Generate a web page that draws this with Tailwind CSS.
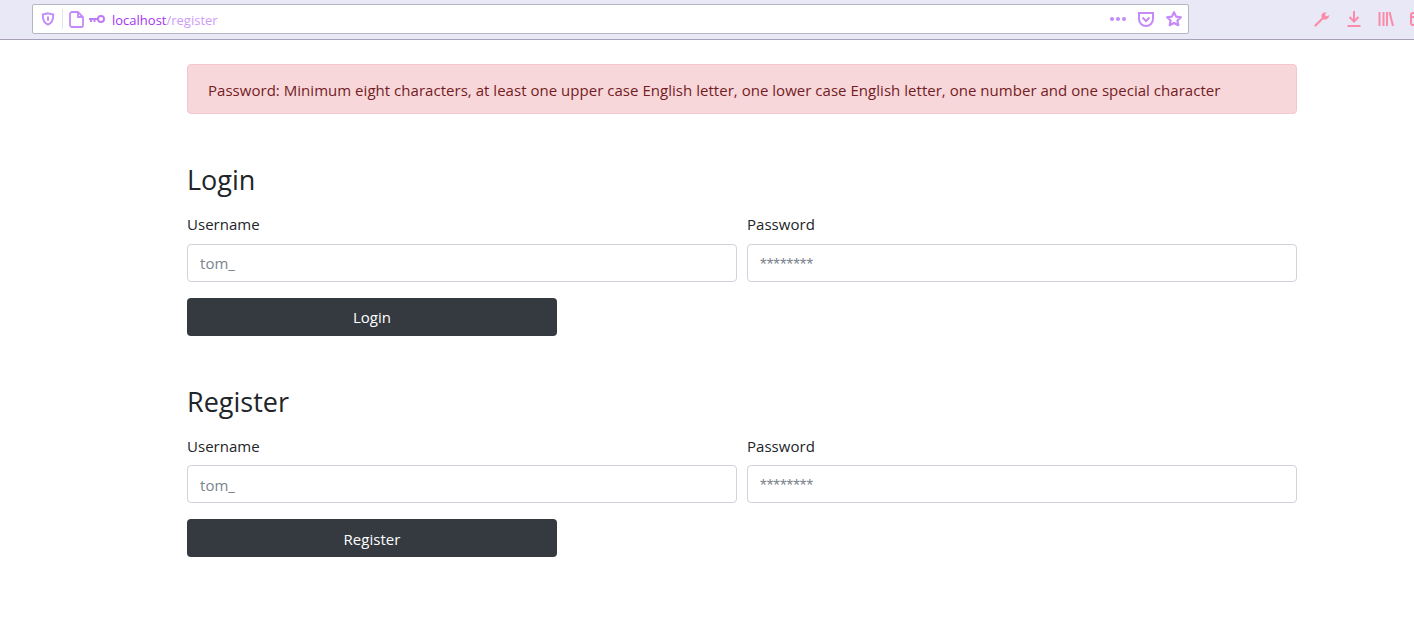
<!DOCTYPE html>
<html lang="en">
<head>
  <meta charset="UTF-8" />
  <title>Register</title>
  <script src="https://cdn.jsdelivr.net/npm/@tailwindcss/browser@4"></script>
</head>
<body class="bg-white text-[#212529] font-['Open_Sans',sans-serif] text-[15px] tracking-[0.03px] overflow-hidden">
  <!-- Browser toolbar -->
  <header class="h-10 bg-[#e8e8f6] border-b border-[#a79fb5] flex items-center pl-8">
    <div class="w-[1157px] h-[30px] mb-[1px] bg-white border border-[#b5b5c4] rounded-[2px] flex items-center shrink-0">
      <svg class="ml-[8px] w-3.5 h-3.5 text-[#c58af9]" viewBox="0 0 16 16" fill="none" stroke="currentColor" stroke-width="2.200"><path d="M8 1.500l6 1.500c0 6-1.500 9.500-6 11.500C3.500 12.500 2 9 2 3z"/><path d="M8 5v5" /></svg>
      <div class="ml-[7px] w-px h-[20px] bg-[#e3e3ea]"></div>
      <svg class="ml-[6px] w-[15px] h-[17px] text-[#c58af9]" viewBox="0 0 15 17" fill="none" stroke="currentColor" stroke-width="1.800"><path d="M3 1h6l5 5v8.500a1.500 1.500 0 0 1-1.500 1.500h-9.500a2 2 0 0 1-2-2v-11a2 2 0 0 1 2-2z"/><path d="M9 1v5h5"/></svg>
      <svg class="ml-[4px] w-[17px] h-[10px] text-[#c07cf7]" viewBox="0 0 17 10" fill="none" stroke="currentColor" stroke-width="2"><circle cx="13" cy="5" r="3"/><path d="M10 5H1M3 5v3M6.500 5v3"/></svg>
      <span class="ml-[7px] text-[13px] leading-[30px] pt-[1px] text-[#a733f5] tracking-normal">localhost<span class="text-[#cd9bfa]">/register</span></span>
      <div class="ml-auto flex items-center">
        <svg class="w-4 h-1 mr-[2px] text-[#c58af9]" viewBox="0 0 16 4" fill="currentColor"><circle cx="2" cy="2" r="2"/><circle cx="8" cy="2" r="2"/><circle cx="14" cy="2" r="2"/></svg>
        <svg class="ml-[10px] w-4 h-[15px] text-[#c58af9]" viewBox="0 0 16 15" fill="none" stroke="currentColor" stroke-width="2"><path d="M1 1h14v6a7 7 0 0 1-14 0z"/><path d="M4.500 5.500L8 9l3.500-3.500"/></svg>
        <svg class="ml-[12px] mr-[6px] w-4 h-4 text-[#c58af9]" viewBox="0 0 16 16" fill="none" stroke="currentColor" stroke-width="2.100" stroke-linejoin="round"><path d="M8 1.200l2.100 4.400 4.800.6-3.500 3.300.9 4.800L8 12l-4.300 2.300.9-4.800L1.100 6.200l4.800-.6z"/></svg>
      </div>
    </div>
    <div class="flex items-center ml-[125px] text-[#fb8ba8] mb-[1px]">
      <svg class="w-4 h-4" viewBox="0 0 16 16" fill="none" stroke="currentColor" stroke-width="2.200" stroke-linecap="round"><path d="M1.500 14.500l7.500-7.500"/><path d="M10 1.500a4 4 0 0 0-2.500 4.500l2.500 2.500a4 4 0 0 0 4.500-2l1-2.500-3 1.500-1.500-1.500 1.500-2.500z" fill="currentColor" stroke="none"/></svg>
      <svg class="ml-[16px] w-4 h-4" viewBox="0 0 16 16" fill="none" stroke="currentColor" stroke-width="2"><path d="M8 0v10M3.500 6L8 10.500 12.500 6M1.500 15h13"/></svg>
      <svg class="ml-[16px] w-4 h-4" viewBox="0 0 16 16" fill="none" stroke="currentColor" stroke-width="2"><path d="M1.500 1v14M5.500 1v14M9 1v14M11.500 1l3.500 14"/></svg>
      <svg class="ml-[16px] w-4 h-4" viewBox="0 0 16 16" fill="none" stroke="currentColor" stroke-width="2"><rect x="1" y="2" width="14" height="12" rx="2"/><path d="M1 6h14"/></svg>
    </div>
  </header>

  <main class="w-[1110px] ml-[187px] pt-6">
    <div class="h-[50px] px-5 pt-[2px] flex items-center bg-[#f8d7da] border border-[#f5c6cb] rounded text-[#721c24]">Password: Minimum eight characters, at least one upper case English letter, one lower case English letter, one number and one special character</div>

    <section class="mt-[48px]">
      <h2 class="h-[34px] pt-[1px] text-[27px] leading-[34px] tracking-normal">Login</h2>
      <div class="mt-4 grid grid-cols-2 gap-[10px]">
        <label class="block">
          <span class="block leading-6">Username</span>
          <input placeholder="tom_" class="mt-2 block w-full h-[38px] px-3 border border-[#ced4da] rounded bg-white placeholder:text-[#7c858d]" />
        </label>
        <label class="block">
          <span class="block leading-6">Password</span>
          <input placeholder="********" class="mt-2 block w-full h-[38px] px-3 pt-[4px] border border-[#ced4da] rounded bg-white font-['Liberation_Sans',sans-serif] text-[17px] placeholder:text-[#7c858d]" />
        </label>
      </div>
      <button class="mt-4 block w-[370px] h-[38px] bg-[#343a40] text-white rounded">Login</button>
    </section>

    <section class="mt-[48px]">
      <h2 class="h-[34px] pt-[1px] text-[27px] leading-[34px] tracking-normal">Register</h2>
      <div class="mt-4 grid grid-cols-2 gap-[10px]">
        <label class="block">
          <span class="block leading-6">Username</span>
          <input placeholder="tom_" class="mt-[7px] block w-full h-[38px] px-3 pt-[2px] border border-[#ced4da] rounded bg-white placeholder:text-[#7c858d]" />
        </label>
        <label class="block">
          <span class="block leading-6">Password</span>
          <input placeholder="********" class="mt-[7px] block w-full h-[38px] px-3 pt-[4px] border border-[#ced4da] rounded bg-white font-['Liberation_Sans',sans-serif] text-[17px] placeholder:text-[#7c858d]" />
        </label>
      </div>
      <button class="mt-4 block w-[370px] h-[38px] pt-[2px] bg-[#343a40] text-white rounded">Register</button>
    </section>
  </main>
</body>
</html>
